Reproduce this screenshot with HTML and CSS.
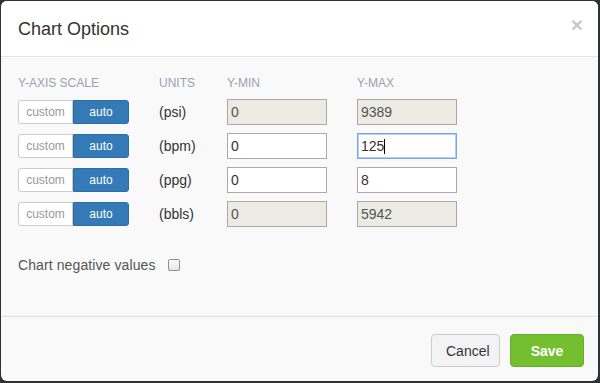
FILE: index.html
```html
<!DOCTYPE html>
<html>

<head>
  <meta charset="utf-8">
  <link rel="stylesheet" href="styles.css">
</head>

<body>
  <div class="modal">
    <div class="modal-header">
      <h4 class="modal-title">Chart Options</h4>
      <span class="close">&times;</span>
    </div>

    <div class="modal-body">
      <div class="axis-grid">
        <div class="col-label">Y-Axis Scale</div>
        <div class="col-label">Units</div>
        <div class="col-label">Y-Min</div>
        <div class="col-label">Y-Max</div>

        <div class="btn-group"><button class="btn">custom</button><button class="btn active">auto</button></div>
        <div class="unit">(psi)</div>
        <input class="field" type="text" value="0" disabled>
        <input class="field" type="text" value="9389" disabled>

        <div class="btn-group"><button class="btn">custom</button><button class="btn active">auto</button></div>
        <div class="unit">(bpm)</div>
        <input class="field" type="text" value="0">
        <span class="field-wrap">
          <input class="field focused" type="text" value="125">
          <span class="caret"></span>
        </span>

        <div class="btn-group"><button class="btn">custom</button><button class="btn active">auto</button></div>
        <div class="unit">(ppg)</div>
        <input class="field" type="text" value="0">
        <input class="field" type="text" value="8">

        <div class="btn-group"><button class="btn">custom</button><button class="btn active">auto</button></div>
        <div class="unit">(bbls)</div>
        <input class="field" type="text" value="0" disabled>
        <input class="field" type="text" value="5942" disabled>
      </div>

      <label class="negative">Chart negative values <span class="checkbox"></span></label>
    </div>

    <div class="modal-footer">
      <button class="btn-footer cancel">Cancel</button>
      <button class="btn-footer save">Save</button>
    </div>
  </div>
</body>

</html>
```

FILE: styles.css
```css
* {
  box-sizing: border-box;
}

body {
  font-family: "Liberation Sans", Arial, sans-serif;
  margin: 0;
  padding: 1px 2px 2px 1px;
  background-color: #2f3133;
  color: #333;
  height: 383px;
  overflow: hidden;
}

.modal {
  width: 597px;
  height: 380px;
  display: flex;
  flex-direction: column;
  background: #f9f9f9;
  border-radius: 6px;
  overflow: hidden;
}

.modal-header {
  position: relative;
  background: #fff;
  padding: 15px 17px 14px;
  border-bottom: 1px solid #e5e5e5;
}

.modal-title {
  margin: 0;
  font-size: 18px;
  font-weight: normal;
  line-height: 26px;
  color: #333;
}

.close {
  position: absolute;
  right: 15px;
  top: 11px;
  font-size: 21px;
  font-weight: bold;
  line-height: 26px;
  color: #c9c9c9;
}

.modal-body {
  flex: 1;
  padding: 18px 17px 0;
}

.axis-grid {
  display: grid;
  grid-template-columns: 141px 68px 130px 100px;
  grid-template-rows: 16px;
  grid-auto-rows: 26px;
  row-gap: 8px;
  align-items: center;
}

.axis-grid .col-label {
  font-size: 12px;
  line-height: 16px;
  text-transform: uppercase;
  color: #9aa3ad;
}

.btn-group {
  display: flex;
  width: 111px;
  height: 24px;
}

.btn {
  font-family: inherit;
  font-size: 12px;
  height: 24px;
  padding: 0;
  border: 1px solid #ccc;
  background: #fff;
  color: #999;
  border-radius: 3px 0 0 3px;
}

.btn:first-child {
  width: 55px;
}

.btn.active {
  width: 56px;
  background: #337ab7;
  border-color: #2e6da4;
  color: #fff;
  border-radius: 0 3px 3px 0;
}

.unit {
  font-size: 14px;
  color: #333;
}

.field {
  width: 100px;
  height: 26px;
  margin: 0;
  padding: 0 3px;
  font-family: inherit;
  font-size: 14px;
  color: #333;
  background: #fff;
  border: 1px solid #a9a9a9;
  outline: none;
}

.field:disabled {
  background: #ebebe4;
  color: #545454;
}

.field-wrap {
  position: relative;
  width: 100px;
  height: 26px;
}

.field.focused {
  border-color: #7ba4e3;
  box-shadow: 0 0 0 1px #b6cdf2 inset;
}

.caret {
  position: absolute;
  left: 27px;
  top: 6px;
  width: 1px;
  height: 15px;
  background: #000;
}

.negative {
  display: flex;
  align-items: center;
  margin-top: 28px;
  font-size: 14px;
  line-height: 20px;
  color: #555;
  letter-spacing: 0.1px;
}

.checkbox {
  display: inline-block;
  width: 12px;
  height: 12px;
  margin-left: 12px;
  border: 1px solid #8f8f8f;
  border-radius: 2px;
  background: linear-gradient(#fcfcfc, #e6e6e6);
}

.modal-footer {
  display: flex;
  justify-content: flex-end;
  gap: 10px;
  padding: 17px 14px 14px;
  border-top: 1px solid #e0e0e0;
}

.btn-footer {
  height: 33px;
  padding: 0 14px;
  font-family: inherit;
  font-size: 14px;
  border-radius: 4px;
  border: 1px solid #ccc;
}

.cancel {
  width: 69px;
  background: #f3f3f3;
  color: #333;
}

.save {
  width: 74px;
  background: #73bf2f;
  border-color: #66ad28;
  color: #fff;
  font-weight: bold;
}
```
